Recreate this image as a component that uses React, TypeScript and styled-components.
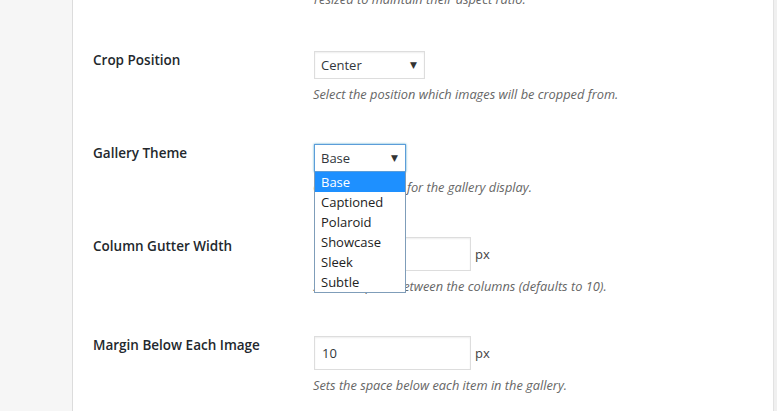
import React from 'react'
import styled, {createGlobalStyle} from 'styled-components'

const Global = createGlobalStyle`
  html, body { margin: 0; padding: 0; }
  body {
    width: 777px;
    height: 411px;
    overflow: hidden;
    background: #f1f1f1;
    font-family: "Open Sans", "Noto Sans", sans-serif;
    color: #23282d;
  }
`

const themes = ['Base', 'Captioned', 'Polaroid', 'Showcase', 'Sleek', 'Subtle']

const App = () => {
  return (
    <>
      <Global />
      <Page>
        <Sidebar />
        <Content>
          <TopNote>resized to maintain their aspect ratio.</TopNote>

          <Row>
            <Label>Crop Position</Label>
            <Field>
              <Select width={111}>
                <span>Center</span>
                <Arrow>▼</Arrow>
              </Select>
              <Description>Select the position which images will be cropped from.</Description>
            </Field>
          </Row>

          <Row>
            <Label>Gallery Theme</Label>
            <Field>
              <SelectWrap>
                <Select width={92} focused>
                  <span>Base</span>
                  <Arrow>▼</Arrow>
                </Select>
                <Options>
                  {themes.map((t, i) => (
                    <Option key={t} active={i === 0}>{t}</Option>
                  ))}
                </Options>
              </SelectWrap>
              <Description>Choose a theme for the gallery display.</Description>
            </Field>
          </Row>

          <Row>
            <Label>Column Gutter Width</Label>
            <Field>
              <InputLine>
                <Input defaultValue="10" />
                <Unit>px</Unit>
              </InputLine>
              <Description>Sets the space between the columns (defaults to 10).</Description>
            </Field>
          </Row>

          <Row>
            <Label>Margin Below Each Image</Label>
            <Field>
              <InputLine>
                <Input defaultValue="10" />
                <Unit>px</Unit>
              </InputLine>
              <Description>Sets the space below each item in the gallery.</Description>
            </Field>
          </Row>
        </Content>
        <Edge />
      </Page>
    </>
  )
}

export default App

const Page = styled.div`
  display: flex;
  width: 777px;
  height: 411px;
  overflow: hidden;
`

const Sidebar = styled.div`
  width: 72px;
  flex-shrink: 0;
  background: #f6f6f6;
  border-right: 1px solid #dcdcdc;
`

const Edge = styled.div`
  width: 3px;
  flex-shrink: 0;
  background: #f0f0f0;
  border-left: 1px solid #e2e2e2;
`

const Content = styled.div`
  flex: 1;
  background: #fff;
  padding-left: 20px;
`

const TopNote = styled.p`
  margin: -11px 0 0 221px;
  font-size: 12.8px;
  line-height: 20px;
  font-style: italic;
  color: #666;
`

const Row = styled.div`
  display: flex;
  padding: 40px 0 0;
  &:first-of-type { padding-top: 42px; }
`

const Label = styled.div`
  width: 221px;
  flex-shrink: 0;
  font-size: 13.5px;
  font-weight: 600;
  line-height: 18px;
  color: #23282d;
`

const Field = styled.div`
  display: flex;
  flex-direction: column;
  align-items: flex-start;
`

const SelectWrap = styled.div`
  position: relative;
`

const Select = styled.div<{width: number; focused?: boolean}>`
  box-sizing: border-box;
  width: ${p => p.width}px;
  height: 28px;
  display: flex;
  align-items: center;
  justify-content: space-between;
  padding: 0 7px 0 6px;
  font-size: 13px;
  color: #32373c;
  background: #fff;
  border: 1px solid ${p => (p.focused ? '#5b9dd9' : '#ddd')};
  box-shadow: ${p => (p.focused ? '0 0 2px rgba(30,140,190,.8)' : 'inset 0 1px 2px rgba(0,0,0,.07)')};
`

const Arrow = styled.span`
  font-family: "DejaVu Sans", sans-serif;
  font-size: 9px;
  color: #333;
`

const Options = styled.ul`
  position: absolute;
  top: 28px;
  left: 0;
  z-index: 2;
  box-sizing: border-box;
  width: 92px;
  margin: 0;
  padding: 0;
  list-style: none;
  background: #fff;
  border: 1px solid #7f9db9;
  border-top: 0;
`

const Option = styled.li<{active?: boolean}>`
  height: 20px;
  line-height: 20px;
  padding: 0 6px;
  font-size: 13px;
  color: ${p => (p.active ? '#fff' : '#222')};
  background: ${p => (p.active ? '#1e90ff' : 'transparent')};
`

const Description = styled.p`
  margin: 5px 0 0 -1px;
  font-size: 12.8px;
  line-height: 20px;
  font-style: italic;
  color: #666;
  white-space: nowrap;
`

const InputLine = styled.div`
  display: flex;
  align-items: center;
  gap: 4px;
`

const Input = styled.input`
  box-sizing: border-box;
  width: 157px;
  height: 34px;
  padding: 0 7px;
  font-family: inherit;
  font-size: 13px;
  color: #32373c;
  border: 1px solid #ddd;
  border-radius: 0;
  box-shadow: inset 0 1px 2px rgba(0,0,0,.07);
  outline: none;
`

const Unit = styled.span`
  font-size: 13px;
  color: #444;
`
